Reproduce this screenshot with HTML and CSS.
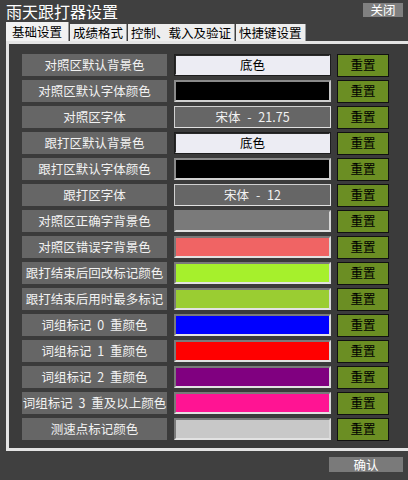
FILE: index.html
```html
<!DOCTYPE html>
<html lang="zh">
<head>
<meta charset="utf-8">
<link rel="stylesheet" href="styles.css">
</head>
<body>
<div class="window">
  <div class="header">
    <div class="title">雨天跟打器设置</div>
    <div class="close-btn">关闭</div>
  </div>
  <div class="tabs">
    <div class="tab active">基础设置</div>
    <div class="tab">成绩格式</div>
    <div class="tab">控制、载入及验证</div>
    <div class="tab">快捷键设置</div>
  </div>
  <div class="panel">
    <div class="grid">
      <div class="label">对照区默认背景色</div><div class="field f-white">底色</div><div class="reset">重置</div>
      <div class="label">对照区默认字体颜色</div><div class="field f-black"></div><div class="reset">重置</div>
      <div class="label">对照区字体</div><div class="field f-font">宋体 - 21.75</div><div class="reset">重置</div>
      <div class="label">跟打区默认背景色</div><div class="field f-white">底色</div><div class="reset">重置</div>
      <div class="label">跟打区默认字体颜色</div><div class="field f-black"></div><div class="reset">重置</div>
      <div class="label">跟打区字体</div><div class="field f-font">宋体 - 12</div><div class="reset">重置</div>
      <div class="label">对照区正确字背景色</div><div class="field f-gray"></div><div class="reset">重置</div>
      <div class="label">对照区错误字背景色</div><div class="field f-salmon"></div><div class="reset">重置</div>
      <div class="label">跟打结束后回改标记颜色</div><div class="field f-lime"></div><div class="reset">重置</div>
      <div class="label">跟打结束后用时最多标记</div><div class="field f-yellowgreen"></div><div class="reset">重置</div>
      <div class="label">词组标记 0 重颜色</div><div class="field f-blue"></div><div class="reset">重置</div>
      <div class="label">词组标记 1 重颜色</div><div class="field f-red"></div><div class="reset">重置</div>
      <div class="label">词组标记 2 重颜色</div><div class="field f-purple"></div><div class="reset">重置</div>
      <div class="label">词组标记 3 重及以上颜色</div><div class="field f-pink"></div><div class="reset">重置</div>
      <div class="label">测速点标记颜色</div><div class="field f-silver"></div><div class="reset">重置</div>
    </div>
  </div>
  <div class="footer">
    <div class="ok-btn">确认</div>
  </div>
</div>
</body>
</html>
```

FILE: styles.css
```css
html, body {
  margin: 0;
  padding: 0;
  background: #404040;
}
body {
  font-family: "Noto Sans CJK SC", "Noto Sans", sans-serif;
  width: 408px;
  height: 480px;
}
.window {
  display: flex;
  flex-direction: column;
}
.header {
  display: flex;
  justify-content: space-between;
  align-items: flex-start;
  height: 22px;
}
.title {
  color: #ffffff;
  font-size: 16px;
  line-height: 22px;
  padding-left: 6px;
}
.close-btn {
  margin-top: 3px;
  margin-right: 5px;
  width: 40px;
  height: 14px;
  line-height: 14px;
  background: #808080;
  color: #ffffff;
  font-size: 12.5px;
  text-align: center;
}
.tabs {
  display: flex;
  align-items: flex-end;
  gap: 1px;
  padding-left: 6px;
  height: 19px;
}
.tab {
  background: #eeeeee;
  color: #000;
  font-size: 12.5px;
  height: 17px;
  line-height: 17px;
  padding: 0 3px;
  border-right: 1px solid #9a9a9a;
}
.tab.active {
  height: 19px;
  line-height: 19px;
  padding: 0 6px;
  background: #f2f2f2;
}
.panel {
  margin-left: 6px;
  width: 389px;
  border: 3px solid #e4e4e4;
  background: #3b3b3b;
  padding: 10px 0 8px 13px;
}
.grid {
  display: grid;
  grid-template-columns: 145px 157px 51px;
  grid-auto-rows: 22px;
  column-gap: 7px;
  row-gap: 4px;
}
.grid .reset {
  margin-left: -1px;
}
.label {
  background: #666666;
  color: #f2f2f2;
  font-size: 12.5px;
  line-height: 22px;
  text-align: center;
  white-space: nowrap;
  word-spacing: 3px;
}
.field {
  box-sizing: border-box;
  border-style: solid;
  border-width: 2px;
  border-color: #7a7a7a #d8d8d8 #e2e2e2 #7a7a7a;
  font-size: 12.5px;
  line-height: 18px;
  text-align: center;
  color: #000;
}
.f-white { background: #ececf3; border-color: #2a2a2a #ececf3 #ececf3 #2a2a2a; outline: 1px solid #1e1e1e; outline-offset: -1px; }
.f-black { background: #000000; border-color: #8a8a8a #c8c8c8 #d0d0d0 #8a8a8a; }
.f-font { background: #666666; color: #f2f2f2; border-color: #d0d0d0 #e0e0e0 #e0e0e0 #d0d0d0; border-width: 1px; line-height: 20px; word-spacing: 4px; }
.f-gray { background: #7a7a7a; }
.f-salmon { background: #f06464; }
.f-lime { background: #a6f02c; }
.f-yellowgreen { background: #9acd32; }
.f-blue { background: #0000ff; }
.f-red { background: #ff0000; }
.f-purple { background: #800080; }
.f-pink { background: #ff1493; }
.f-silver { background: #c8c8c8; }
.reset {
  box-sizing: border-box;
  background: #6b8e23;
  border: 1px solid #111;
  color: #000;
  font-size: 12.5px;
  line-height: 20px;
  text-align: center;
  height: 23px;
}
.footer {
  display: flex;
  justify-content: flex-end;
  padding-top: 6px;
  padding-right: 5px;
}
.ok-btn {
  width: 74px;
  height: 15px;
  line-height: 15px;
  background: #7a7a7a;
  color: #ffffff;
  font-size: 12.5px;
  text-align: center;
}
```
